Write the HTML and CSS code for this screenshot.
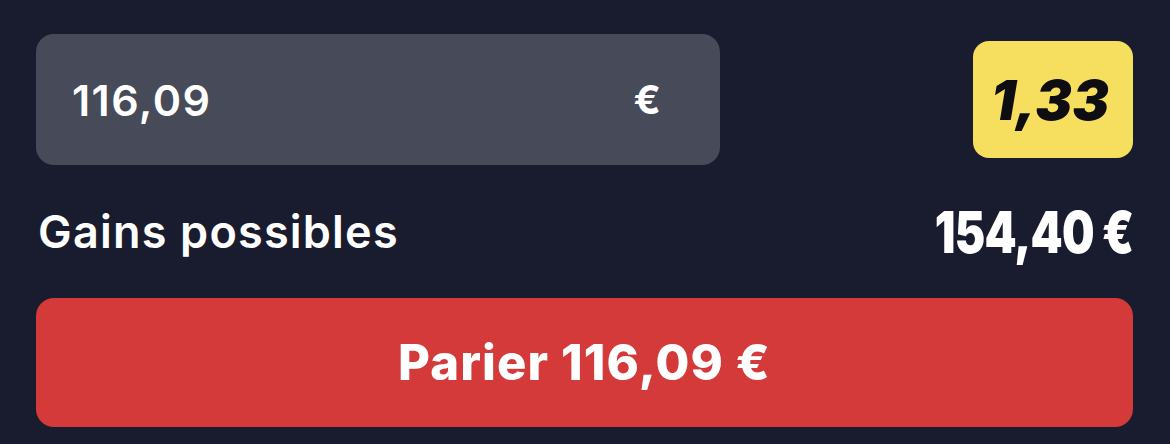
FILE: index.html
```html
<!DOCTYPE html>
<html lang="fr">
<head>
    <meta charset="UTF-8">
    <meta name="viewport" content="width=device-width, initial-scale=1.0">
    <title>Pari</title>
    <link rel="stylesheet" href="styles.css">
</head>
<body>
    <div class="bet-slip">
        <div class="stake-row">
            <label class="stake-input">
                <span class="stake-value">116,09</span>
                <span class="stake-currency">€</span>
            </label>
            <div class="odds-badge">1,33</div>
        </div>

        <div class="gains-row">
            <span class="gains-label">Gains possibles</span>
            <span class="gains-amount">154,40 €</span>
        </div>

        <button class="bet-button">Parier 116,09 €</button>
    </div>
</body>
</html>
```

FILE: styles.css
```css
body {
    margin: 0;
    background-color: #191c2f;
    font-family: Inter, 'Noto Sans', sans-serif;
    color: #fff;
}
.bet-slip {
    padding: 34px 37px 0 36px;
}
.stake-row {
    display: flex;
    align-items: center;
    justify-content: space-between;
    height: 131px;
}
.stake-input {
    display: flex;
    align-items: center;
    justify-content: space-between;
    box-sizing: border-box;
    width: 684px;
    height: 131px;
    padding: 0 59px 0 36px;
    background-color: #474a58;
    border-radius: 18px;
}
.stake-value {
    font-size: 43px;
    font-weight: 600;
    letter-spacing: 1.4px;
}
.stake-currency {
    font-size: 40px;
    font-weight: 700;
}
.odds-badge {
    display: flex;
    align-items: center;
    justify-content: center;
    box-sizing: border-box;
    width: 160px;
    height: 117px;
    padding-right: 6px;
    background-color: #f6df5f;
    border-radius: 16px;
    color: #0d0d12;
    font-size: 55px;
    font-weight: 900;
    font-style: italic;
}
.gains-row {
    display: flex;
    align-items: center;
    justify-content: space-between;
    height: 133px;
}
.gains-label {
    padding-left: 2px;
    font-size: 45px;
    font-weight: 600;
    letter-spacing: 1.2px;
}
.gains-amount {
    display: inline-block;
    font-size: 58px;
    font-weight: 900;
    letter-spacing: -1px;
    transform: scaleX(0.79);
    transform-origin: right center;
}
.bet-button {
    display: block;
    width: 100%;
    height: 129px;
    border: none;
    border-radius: 18px;
    background-color: #d33a39;
    color: #fff;
    font-family: inherit;
    font-size: 49px;
    font-weight: 800;
    letter-spacing: 1.1px;
}
```
